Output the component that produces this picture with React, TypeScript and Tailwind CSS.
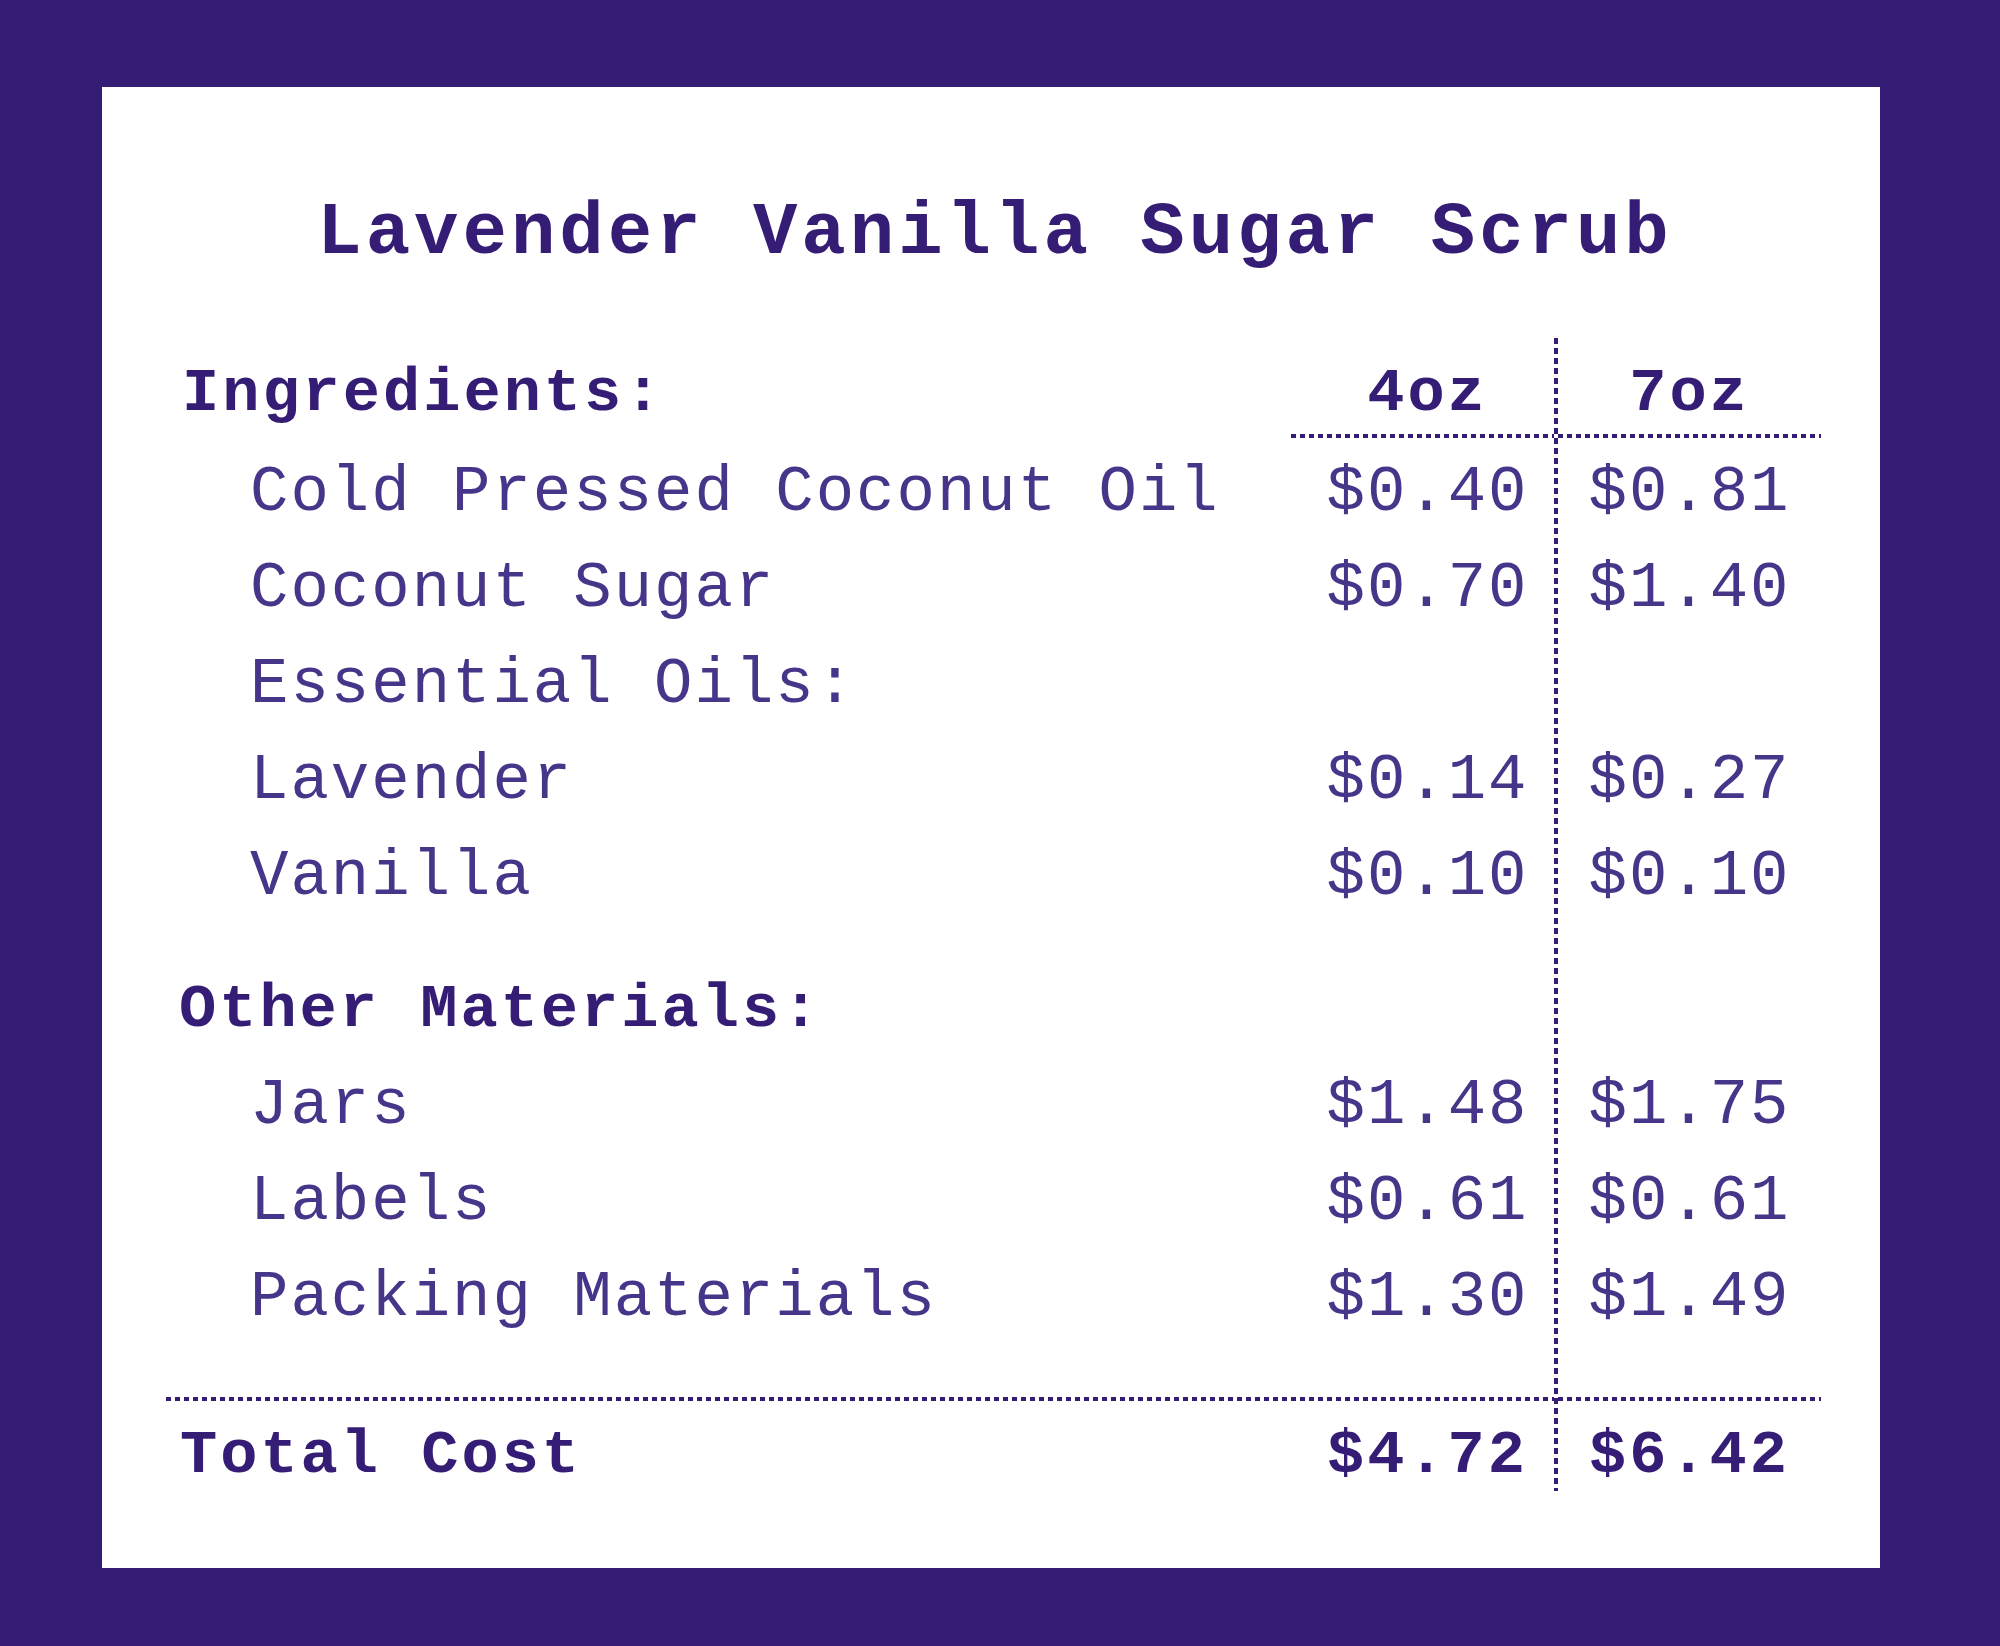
type Row = {
  kind: 'head' | 'headRule' | 'gap' | 'item' | 'section' | 'rule' | 'total';
  label?: string;
  a?: string;
  b?: string;
};

// heights live in the grid-rows class below, keep them in the same order
const rows: Row[] = [
  { kind: 'head', label: 'Ingredients:', a: '4oz', b: '7oz' },
  { kind: 'headRule' },
  { kind: 'gap' },
  { kind: 'item', label: 'Cold Pressed Coconut Oil', a: '$0.40', b: '$0.81' },
  { kind: 'item', label: 'Coconut Sugar', a: '$0.70', b: '$1.40' },
  { kind: 'item', label: 'Essential Oils:' },
  { kind: 'item', label: 'Lavender', a: '$0.14', b: '$0.27' },
  { kind: 'item', label: 'Vanilla', a: '$0.10', b: '$0.10' },
  { kind: 'gap' },
  { kind: 'section', label: 'Other Materials:' },
  { kind: 'item', label: 'Jars', a: '$1.48', b: '$1.75' },
  { kind: 'item', label: 'Labels', a: '$0.61', b: '$0.61' },
  { kind: 'item', label: 'Packing Materials', a: '$1.30', b: '$1.49' },
  { kind: 'gap' },
  { kind: 'rule' },
  { kind: 'total', label: 'Total Cost', a: '$4.72', b: '$6.42' },
];

const hDots = 'bg-[image:repeating-linear-gradient(to_right,#351c75_0_5px,transparent_5px_9px)]';

function Cells({ row }: { row: Row }) {
  switch (row.kind) {
    case 'head':
      return (
        <>
          <div className="pt-[16px] pl-[16px] text-[62px] leading-[80px] font-bold tracking-[3px]">{row.label}</div>
          <div className="pt-[16px] pl-[10px] text-center text-[62px] leading-[80px] font-bold tracking-[3px]">{row.a}</div>
          <div className="pt-[16px] text-center text-[62px] leading-[80px] font-bold tracking-[3px]">{row.b}</div>
        </>
      );
    case 'headRule':
      return (
        <>
          <div></div>
          <div className={hDots}></div>
          <div className={hDots}></div>
        </>
      );
    case 'rule':
      return (
        <>
          <div className={hDots}></div>
          <div className={hDots}></div>
          <div className={hDots}></div>
        </>
      );
    case 'gap':
      return (
        <>
          <div></div>
          <div></div>
          <div></div>
        </>
      );
    case 'section':
      return (
        <>
          <div className="pl-[13px] text-[62px] leading-[96px] font-bold tracking-[3px] whitespace-nowrap">{row.label}</div>
          <div></div>
          <div></div>
        </>
      );
    case 'total':
      return (
        <>
          <div className="pt-[20px] pl-[14px] text-[62px] leading-[70px] font-bold tracking-[3px]">{row.label}</div>
          <div className="pt-[20px] pl-[10px] text-center text-[62px] leading-[70px] font-bold tracking-[3px]">{row.a}</div>
          <div className="pt-[20px] text-center text-[62px] leading-[70px] font-bold tracking-[3px]">{row.b}</div>
        </>
      );
    default:
      return (
        <>
          <div className="pl-[84px] text-[64px] leading-[96px] tracking-[2px] whitespace-nowrap text-[#47358a]">{row.label}</div>
          <div className="pl-[10px] text-center text-[64px] leading-[96px] tracking-[2px] text-[#47358a]">{row.a}</div>
          <div className="text-center text-[64px] leading-[96px] tracking-[2px] text-[#47358a]">{row.b}</div>
        </>
      );
  }
}

export default function App() {
  return (
    <div className="min-h-screen w-full bg-[#351c75] pt-[87px] pl-[102px] font-['Liberation_Mono',monospace] text-[#351c75]">
      <div className="flex h-[1481px] w-[1778px] flex-col bg-white">
        <h1 className="mt-[96px] pl-[8px] text-center text-[74px] leading-[100px] font-bold tracking-[4px]">
          Lavender Vanilla Sugar Scrub
        </h1>

        <div className="mt-[55px] ml-[64px] grid grid-cols-[1125px_263px_4px_263px] grid-rows-[96px_4px_7px_96px_96px_96px_96px_96px_37px_96px_96px_96px_96px_51px_4px_90px]">
          <div className="col-start-3 row-span-full bg-[image:repeating-linear-gradient(to_bottom,#351c75_0_6px,transparent_6px_10px)]"></div>
          {rows.map((row, i) => (
            <Cells key={i} row={row} />
          ))}
        </div>
      </div>
    </div>
  );
}
